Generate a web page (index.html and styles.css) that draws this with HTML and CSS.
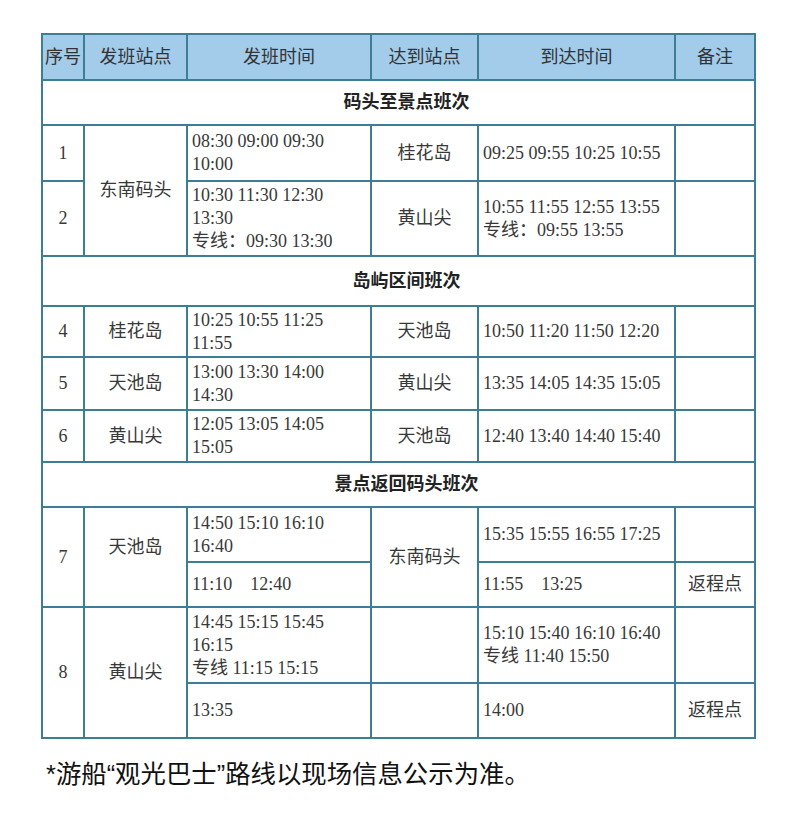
FILE: index.html
```html
<!DOCTYPE html>
<html lang="zh-CN">
<head>
<meta charset="utf-8">
<title>游船班次</title>
<link rel="stylesheet" href="styles.css">
</head>
<body>
<table class="schedule">
  <colgroup>
    <col class="c-no">
    <col class="c-from">
    <col class="c-dep">
    <col class="c-to">
    <col class="c-arr">
    <col class="c-note">
  </colgroup>
  <thead>
    <tr class="r-head">
      <th>序号</th><th>发班站点</th><th>发班时间</th><th>达到站点</th><th>到达时间</th><th>备注</th>
    </tr>
  </thead>
  <tbody>
    <tr class="r-sec1"><td colspan="6" class="sec">码头至景点班次</td></tr>
    <tr class="r-1">
      <td class="ctr">1</td>
      <td class="ctr" rowspan="2">东南码头</td>
      <td class="time">08:30 09:00 09:30 10:00</td>
      <td class="ctr">桂花岛</td>
      <td class="time">09:25 09:55 10:25 10:55</td>
      <td></td>
    </tr>
    <tr class="r-2">
      <td class="ctr">2</td>
      <td class="time">10:30 11:30 12:30 13:30<br>专线：09:30 13:30</td>
      <td class="ctr">黄山尖</td>
      <td class="time">10:55 11:55 12:55 13:55<br>专线：09:55 13:55</td>
      <td></td>
    </tr>
    <tr class="r-sec2"><td colspan="6" class="sec">岛屿区间班次</td></tr>
    <tr class="r-4">
      <td class="ctr">4</td>
      <td class="ctr">桂花岛</td>
      <td class="time">10:25 10:55 11:25 11:55</td>
      <td class="ctr">天池岛</td>
      <td class="time">10:50 11:20 11:50 12:20</td>
      <td></td>
    </tr>
    <tr class="r-5">
      <td class="ctr">5</td>
      <td class="ctr">天池岛</td>
      <td class="time">13:00 13:30 14:00 14:30</td>
      <td class="ctr">黄山尖</td>
      <td class="time">13:35 14:05 14:35 15:05</td>
      <td></td>
    </tr>
    <tr class="r-6">
      <td class="ctr">6</td>
      <td class="ctr">黄山尖</td>
      <td class="time">12:05 13:05 14:05 15:05</td>
      <td class="ctr">天池岛</td>
      <td class="time">12:40 13:40 14:40 15:40</td>
      <td></td>
    </tr>
    <tr class="r-sec3"><td colspan="6" class="sec">景点返回码头班次</td></tr>
    <tr class="r-7a">
      <td class="ctr" rowspan="2">7</td>
      <td class="ctr up" rowspan="2">天池岛</td>
      <td class="time">14:50 15:10 16:10 16:40</td>
      <td class="ctr" rowspan="2">东南码头</td>
      <td class="time">15:35 15:55 16:55 17:25</td>
      <td></td>
    </tr>
    <tr class="r-7b">
      <td class="time">11:10&nbsp;&nbsp;&nbsp; 12:40</td>
      <td class="time">11:55&nbsp;&nbsp;&nbsp; 13:25</td>
      <td class="ctr">返程点</td>
    </tr>
    <tr class="r-8a">
      <td class="ctr" rowspan="2">8</td>
      <td class="ctr" rowspan="2">黄山尖</td>
      <td class="time">14:45 15:15 15:45 16:15<br>专线 11:15 15:15</td>
      <td></td>
      <td class="time">15:10 15:40 16:10 16:40<br>专线 11:40 15:50</td>
      <td></td>
    </tr>
    <tr class="r-8b">
      <td class="time">13:35</td>
      <td></td>
      <td class="time">14:00</td>
      <td class="ctr">返程点</td>
    </tr>
  </tbody>
</table>
<p class="note">*游船“观光巴士”路线以现场信息公示为准。</p>
</body>
</html>
```
FILE: styles.css
```css
html, body {
  margin: 0;
  padding: 0;
  background: #ffffff;
}

.schedule {
  border-collapse: collapse;
  table-layout: fixed;
  width: 713px;
  margin: 33px 0 0 41px;
  font-family: "Liberation Serif", "Noto Sans CJK SC", serif;
  font-size: 18px;
  color: #383838;
}

.c-no { width: 42px; }
.c-from { width: 103px; }
.c-dep { width: 184px; }
.c-to { width: 107px; }
.c-arr { width: 197px; }
.c-note { width: 80px; }

.schedule th,
.schedule td {
  border: 2px solid #3c7e93;
  padding: 0;
  vertical-align: middle;
  line-height: 23px;
}

.schedule th {
  background: #a3cbea;
  font-weight: normal;
  text-align: center;
  color: #333333;
}

.schedule .sec {
  text-align: center;
  font-weight: bold;
  color: #222222;
  padding-left: 16px;
}

.schedule .ctr {
  text-align: center;
}

.schedule .up {
  padding-bottom: 20px;
}

.schedule .time {
  text-align: left;
  padding-left: 4px;
  padding-right: 6px;
}

.r-head { height: 46px; }
.r-sec1 { height: 45px; }
.r-1 { height: 56px; }
.r-2 { height: 75px; }
.r-sec2 { height: 50px; }
.r-4 { height: 51px; }
.r-5 { height: 53px; }
.r-6 { height: 52px; }
.r-sec3 { height: 45px; }
.r-7a { height: 55px; }
.r-7b { height: 45px; }
.r-8a { height: 76px; }
.r-8b { height: 55px; }

.note {
  margin: 20px 0 0 46px;
  font-family: "Liberation Sans", "Noto Sans CJK SC", sans-serif;
  font-size: 25.4px;
  line-height: 31px;
  color: #111111;
}
```
